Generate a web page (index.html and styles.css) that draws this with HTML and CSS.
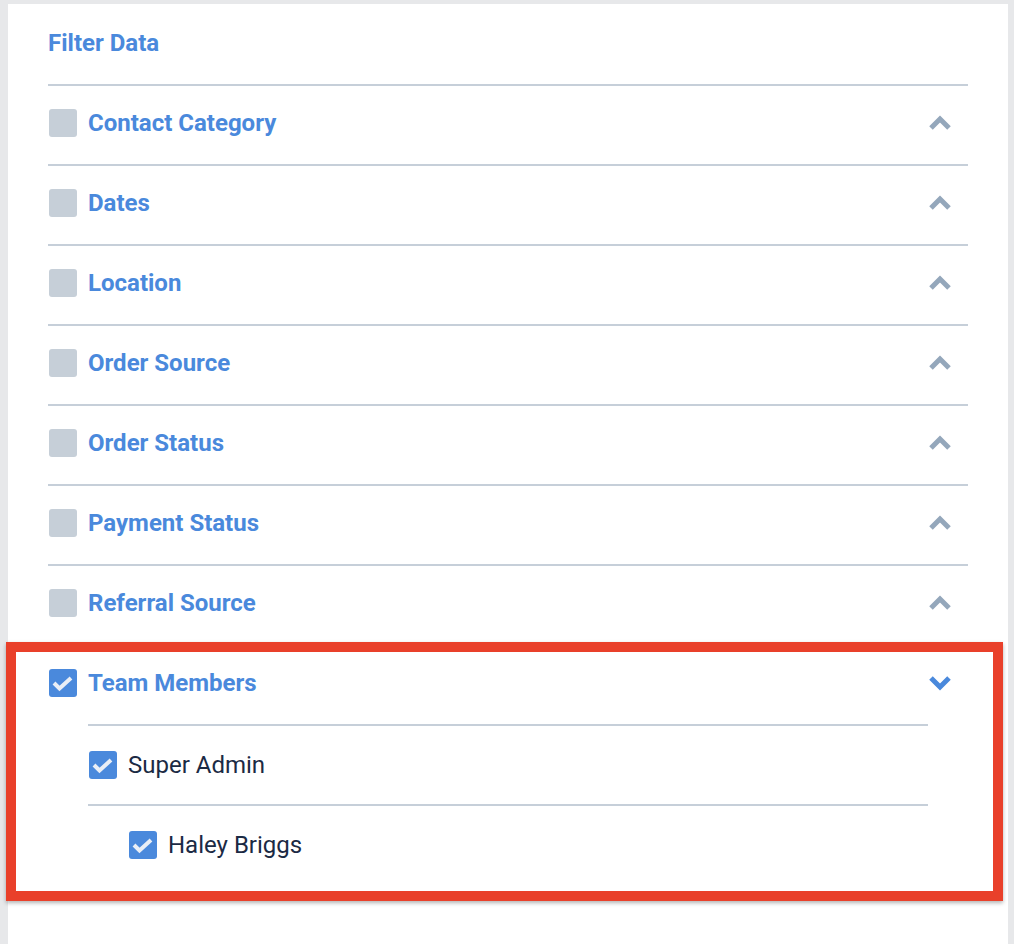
FILE: index.html
```html
<!DOCTYPE html>
<html>
<head>
	<title>Filter Data</title>
	<meta charset="utf-8">
	<meta name="viewport" content="width=device-width, initial-scale=1">

	<link rel="stylesheet" href="styles.css">
</head>
<body>

	<div class="panel">
		<h2 class="title">Filter Data</h2>

		<div class="filter">
			<div class="row">
				<span class="box"></span>
				<span class="label">Contact Category</span>
				<svg class="chevron" viewBox="0 0 24 16"><polyline points="3,13 12,4 21,13"/></svg>
			</div>
		</div>

		<div class="filter">
			<div class="row">
				<span class="box"></span>
				<span class="label">Dates</span>
				<svg class="chevron" viewBox="0 0 24 16"><polyline points="3,13 12,4 21,13"/></svg>
			</div>
		</div>

		<div class="filter">
			<div class="row">
				<span class="box"></span>
				<span class="label">Location</span>
				<svg class="chevron" viewBox="0 0 24 16"><polyline points="3,13 12,4 21,13"/></svg>
			</div>
		</div>

		<div class="filter">
			<div class="row">
				<span class="box"></span>
				<span class="label">Order Source</span>
				<svg class="chevron" viewBox="0 0 24 16"><polyline points="3,13 12,4 21,13"/></svg>
			</div>
		</div>

		<div class="filter">
			<div class="row">
				<span class="box"></span>
				<span class="label">Order Status</span>
				<svg class="chevron" viewBox="0 0 24 16"><polyline points="3,13 12,4 21,13"/></svg>
			</div>
		</div>

		<div class="filter">
			<div class="row">
				<span class="box"></span>
				<span class="label">Payment Status</span>
				<svg class="chevron" viewBox="0 0 24 16"><polyline points="3,13 12,4 21,13"/></svg>
			</div>
		</div>

		<div class="filter">
			<div class="row">
				<span class="box"></span>
				<span class="label">Referral Source</span>
				<svg class="chevron" viewBox="0 0 24 16"><polyline points="3,13 12,4 21,13"/></svg>
			</div>
		</div>

		<div class="filter open">
			<div class="row">
				<span class="box checked">
					<svg viewBox="0 0 28 28"><polyline points="5,14 10.5,19.5 22,9"/></svg>
				</span>
				<span class="label">Team Members</span>
				<svg class="chevron down" viewBox="0 0 24 16"><polyline points="3,3 12,12 21,3"/></svg>
			</div>

			<div class="sublist">
				<div class="row sub">
					<span class="box checked">
						<svg viewBox="0 0 28 28"><polyline points="5,14 10.5,19.5 22,9"/></svg>
					</span>
					<span class="name">Super Admin</span>
				</div>
				<div class="row sub nested">
					<span class="box checked">
						<svg viewBox="0 0 28 28"><polyline points="5,14 10.5,19.5 22,9"/></svg>
					</span>
					<span class="name">Haley Briggs</span>
				</div>
			</div>

			<div class="highlight"></div>
		</div>
	</div>

</body>
</html>
```

FILE: styles.css
```css
* {
	box-sizing: border-box;
}

body {
	margin: 0px;
	padding: 4px 6px 0px 8px;
	background: #e7e8ea;
	font-family: Roboto, "Liberation Sans", sans-serif;
	min-height: 100vh;
}

.panel {
	background: white;
	padding: 0px 40px 60px 40px;
	min-height: 940px;
}

.title {
	margin: 0px;
	padding: 24px 0px 0px 0px;
	height: 80px;
	font-size: 24px;
	line-height: 30px;
	font-weight: 700;
	color: #4a89dc;
}

.filter {
	border-top: 2px solid #c6cfd9;
}

.filter.open {
	position: relative;
}

.row {
	display: flex;
	align-items: center;
	height: 78px;
	padding-bottom: 4px;
}

.box {
	width: 28px;
	height: 28px;
	margin-left: 1px;
	margin-right: 11px;
	border-radius: 3px;
	background: #c6cfd8;
	flex-shrink: 0;
}

.box.checked {
	background: #4a89dc;
}

.box svg {
	display: block;
	width: 28px;
	height: 28px;
	fill: none;
	stroke: #e9eef6;
	stroke-width: 4;
}

.label {
	font-size: 24px;
	font-weight: 700;
	color: #4a89dc;
}

.name {
	font-size: 24px;
	font-weight: 400;
	color: #1b2a44;
}

.chevron {
	width: 24px;
	height: 16px;
	margin-left: auto;
	margin-right: 16px;
	fill: none;
	stroke: #94a7bb;
	stroke-width: 5;
}

.chevron.down {
	stroke: #4a89dc;
}

.sublist {
	margin: 0px 40px;
}

.sub {
	border-top: 2px solid #c6cfd9;
	height: 80px;
	padding-bottom: 0px;
}

.nested {
	padding-left: 40px;
}

.highlight {
	position: absolute;
	top: -4px;
	left: -42px;
	right: -35px;
	bottom: -17px;
	border: 10px solid #e9402a;
	box-shadow: 0px 2px 4px rgba(0,0,0,0.3);
	pointer-events: none;
}
```
